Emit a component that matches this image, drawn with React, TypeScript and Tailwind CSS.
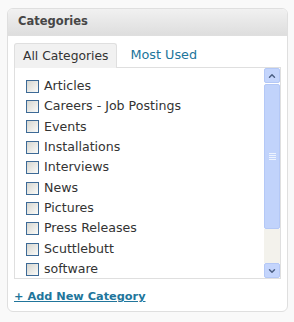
import { ChevronUp, ChevronDown } from "lucide-react";

const categorias = [
    "Articles",
    "Careers - Job Postings",
    "Events",
    "Installations",
    "Interviews",
    "News",
    "Pictures",
    "Press Releases",
    "Scuttlebutt",
    "software",
];

const Casilla = () => (
    <span className="block w-[13px] h-[13px] border border-[#3d6a96] bg-gradient-to-br from-[#d6d6d0] to-[#fbfbf9] shrink-0" />
);

const BarraScroll = () => (
    <div className="w-[16px] flex flex-col shrink-0">
        <div className="h-[15px] flex items-center justify-center rounded-[2px] border border-[#b4c8f6] bg-[#c4d5fc] text-[#4d6185]">
            <ChevronUp className="w-[10px] h-[10px]" strokeWidth={3.5} />
        </div>
        <div className="h-[145px] mt-[1px] rounded-[2px] border border-[#b4c8f6] bg-[#c1d3fb] flex flex-col items-center justify-center gap-[1px]">
            <span className="block w-[7px] h-[1px] bg-[#eef4fe]" />
            <span className="block w-[7px] h-[1px] bg-[#eef4fe]" />
            <span className="block w-[7px] h-[1px] bg-[#eef4fe]" />
            <span className="block w-[7px] h-[1px] bg-[#eef4fe]" />
        </div>
        <div className="flex-1 bg-[#f3f2ec]" />
        <div className="h-[15px] flex items-center justify-center rounded-[2px] border border-[#b4c8f6] bg-[#c4d5fc] text-[#4d6185]">
            <ChevronDown className="w-[10px] h-[10px]" strokeWidth={3.5} />
        </div>
    </div>
);

export default function App() {
    return (
        <div className="w-[294px] h-[322px] bg-[#f9f9f9] pt-[8px] pl-[7px] font-['DejaVu_Sans',Verdana,sans-serif]">
            <div className="w-[281px] h-[304px] border border-[#dfdfdf] rounded-[6px] bg-white overflow-hidden">
                <div className="h-[27px] bg-gradient-to-b from-[#f1f1f1] to-[#dedede] border-b border-[#dfdfdf] flex items-center pl-[10px]">
                    <h3 className="text-[11.5px] font-bold text-[#464646]">Categories</h3>
                </div>
                <div className="pl-[6px] pt-[7px]">
                    <div className="flex items-end h-[24px]">
                        <div className="h-[25px] -mb-[1px] px-[8px] flex items-center bg-[#f1f1f1] border border-[#dfdfdf] border-b-0 rounded-t-[3px] text-[12.3px] text-[#333] relative">
                            All Categories
                        </div>
                        <div className="h-[24px] pl-[13px] flex items-center text-[12.8px] text-[#21759b]">
                            Most Used
                        </div>
                    </div>
                    <div className="w-[267px] h-[212px] border border-[#dfdfdf] flex">
                        <ul className="flex-1 pl-[11px] pt-[8px]">
                            {categorias.map((c) => (
                                <li key={c} className="h-[20.4px] flex items-center gap-[5px] text-[12.6px] text-[#333]">
                                    <Casilla />
                                    <span>{c}</span>
                                </li>
                            ))}
                        </ul>
                        <BarraScroll />
                    </div>
                    <div className="pt-[4px]">
                        <a href="#" className="text-[11.3px] font-bold text-[#21759b] underline">
                            + Add New Category
                        </a>
                    </div>
                </div>
            </div>
        </div>
    );
}
